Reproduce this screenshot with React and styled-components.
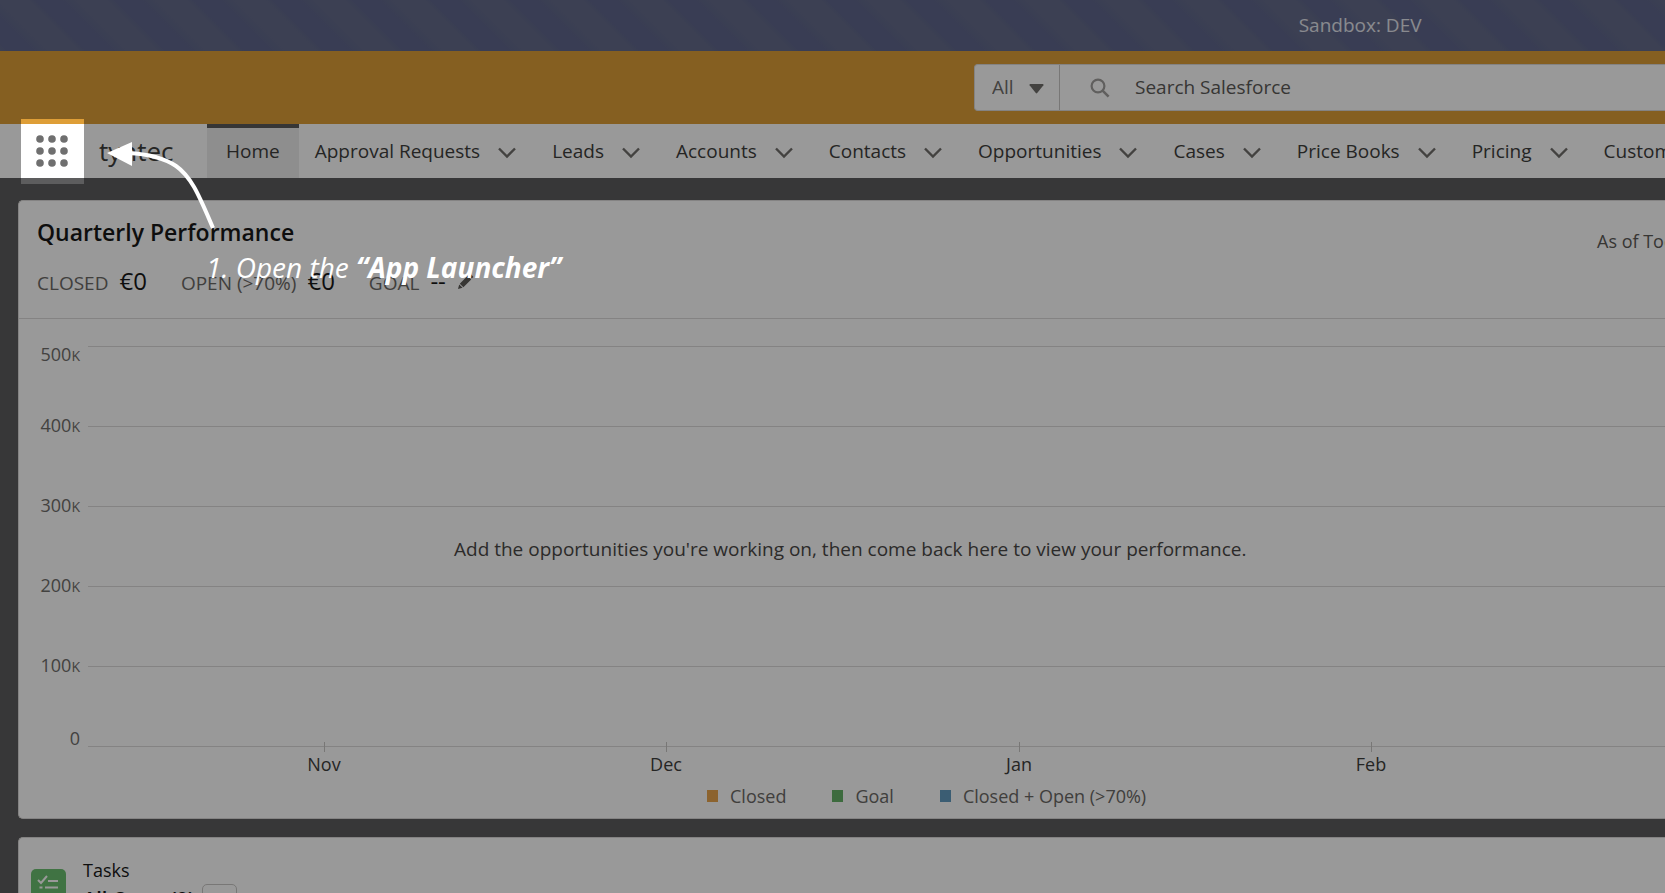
import styled, { createGlobalStyle } from 'styled-components';

const GlobalStyle = createGlobalStyle`
    * {
        box-sizing: border-box;
    }

    body {
        margin: 0;
        overflow: hidden;
        background: #5d5d5e;
        color: #3e3e3c;
        font-family: 'Open Sans', 'Noto Sans', sans-serif;
        font-size: 19px;
        line-height: 24px;
    }

    button,
    input,
    select {
        font: inherit;
        color: inherit;
    }

    h1,
    h2,
    p,
    ul,
    dl,
    dd {
        margin: 0;
        padding: 0;
    }
`;

const Page = styled.div`
    position: relative;
    height: 100vh;
    overflow: hidden;
    white-space: nowrap;
`;

const SandboxBanner = styled.div`
    height: 51px;
    padding-left: 78%;
    line-height: 51px;
    color: #e4e6ee;
    background: repeating-linear-gradient(45deg, #646b8a 0, #5f668c 6px 22px, #646b8a 34px 50px, #646b8a 56px);
`;

const GlobalHeader = styled.header`
    display: flex;
    height: 73px;
    padding: 13px 0 13px 974px;
    background: #de9e37;
`;

const SearchBar = styled.form`
    flex: 1;
    display: flex;
    align-items: center;
    border: 1px solid #dddbda;
    border-right: 0;
    border-radius: 4px 0 0 4px;
    background: #fff;
`;

const ScopeField = styled.label`
    position: relative;
    align-self: stretch;
    width: 85px;
    border-right: 1px solid #c9c7c5;

    svg {
        position: absolute;
        right: 15px;
        top: 19px;
        pointer-events: none;
    }
`;

const ScopeSelect = styled.select`
    appearance: none;
    width: 100%;
    height: 100%;
    padding: 0 0 2px 17px;
    border: 0;
    background: transparent;
    color: #706e6b;
`;

const SearchField = styled.label`
    flex: 1;
    display: flex;
    align-items: center;
    gap: 25px;
    padding-left: 30px;
`;

const SearchInput = styled.input`
    flex: 1;
    padding: 0 0 2px;
    border: 0;
    outline: 0;
    background: transparent;

    &::placeholder {
        color: #5c5a58;
        opacity: 1;
    }
`;

const NavBar = styled.nav`
    display: flex;
    height: 54px;
    padding-left: 32px;
    background: #fff;
`;

const LauncherButton = styled.button`
    flex: none;
    display: flex;
    align-items: center;
    justify-content: center;
    width: 40px;
    padding: 0;
    border: 0;
    background: transparent;
`;

const AppName = styled.h1`
    flex: none;
    width: 135px;
    padding-left: 27px;
    font-size: 26px;
    font-weight: 400;
    line-height: 54px;
`;

const NavList = styled.ul`
    display: flex;
    list-style: none;
`;

const NavItem = styled.li`
    display: flex;
    align-items: center;
    gap: 18px;
    padding: ${(props) => (props.$active ? '0 19px' : '0 20px 0 16px')};
    background: ${(props) => (props.$active ? '#ededed' : 'transparent')};
    box-shadow: ${(props) => (props.$active ? 'inset 0 4px #5a5a5a' : 'none')};
`;

const NavLink = styled.a`
    color: inherit;
    text-decoration: none;
`;

const IconButton = styled.button`
    display: flex;
    padding: 3px 0 0;
    border: 0;
    background: transparent;
`;

const Main = styled.main`
    display: grid;
    gap: 18px;
    padding: 22px 0 0 18px;
`;

const Card = styled.section`
    border: 1px solid #dddbda;
    border-right: 0;
    border-radius: 5px 0 0 5px;
    background: #fff;
`;

const CardHeader = styled.header`
    display: flex;
    justify-content: space-between;
    height: 118px;
    padding: 16px 0 0 18px;
    border-bottom: 1px solid #dddbda;
`;

const CardTitle = styled.h2`
    color: #181818;
    font-size: 23px;
    font-weight: 600;
    line-height: 30px;
`;

const AsOf = styled.p`
    width: 68px;
    padding-top: 12px;
    color: #5c5a58;
    font-size: 18px;
`;

const Stats = styled.dl`
    display: flex;
    gap: 34px;
    padding-top: 22px;
`;

const Stat = styled.div`
    display: flex;
    align-items: baseline;
    gap: 11px;

    dt {
        color: #6b6966;
    }

    dd {
        color: #181818;
        font-size: 24px;
    }
`;

const Chart = styled.div`
    position: relative;
    display: grid;
    grid-template-columns: 61px 1fr;
    column-gap: 8px;
    padding: 27px 0 8px;
`;

const YAxis = styled.ul`
    display: grid;
    grid-template-rows: 40px repeat(4, 80px) 40px;
    align-items: center;
    color: #706e6b;
    font-size: 18px;
    line-height: 16px;
    list-style: none;
    text-align: right;

    li:first-child {
        align-self: start;
    }

    li:last-child {
        align-self: end;
    }

    small {
        font-size: 14px;
    }
`;

const Plot = styled.div`
    display: grid;
    grid-template-rows: repeat(5, 80px);
    height: 402px;
    border-top: 1px solid #dddbda;
`;

const GridRow = styled.div`
    border-bottom: 1px solid #dddbda;
`;

const XAxis = styled.ul`
    grid-column: 2;
    display: grid;
    grid-template-columns: 65px 342fr 342fr 364fr 340fr 124fr;
    margin-top: -6px;
    font-size: 18px;
    list-style: none;
`;

const Month = styled.li`
    display: flex;
    flex-direction: column;
    align-items: center;

    &:first-child {
        grid-column: 2;
    }

    &::before {
        content: '';
        width: 1px;
        height: 10px;
        background: #c9c7c5;
    }
`;

const EmptyMessage = styled.p`
    position: absolute;
    left: 435px;
    top: 218px;
    color: #4a4846;
`;

const Legend = styled.ul`
    display: flex;
    gap: 46px;
    padding: 0 0 10px 688px;
    font-size: 18px;
    list-style: none;
`;

const LegendItem = styled.li`
    display: flex;
    align-items: center;
    gap: 12px;
    color: #6b6966;

    &::before {
        content: '';
        width: 11px;
        height: 12px;
        background: ${(props) => props.$color};
    }
`;

const TaskHeader = styled.header`
    display: flex;
    gap: 17px;
    padding: 20px 0 0 12px;
`;

const TaskIcon = styled.svg`
    margin-top: 11px;
`;

const TaskTitle = styled.h2`
    color: #181818;
    font-size: 18px;
    font-weight: 400;
    line-height: 24px;
`;

const TaskFilter = styled.div`
    display: flex;
    gap: 8px;
    padding-top: 2px;
    color: #181818;
    font-size: 20px;
    font-weight: 600;
    line-height: 30px;
`;

const FilterButton = styled.button`
    width: 35px;
    height: 32px;
    border: 1px solid #c9c7c5;
    border-radius: 5px;
    background: #fff;
`;

// dims everything around the highlighted launcher
const Spotlight = styled.div`
    position: absolute;
    left: 21px;
    top: 119px;
    width: 63px;
    height: 65px;
    box-shadow: 0 0 0 4000px rgba(0, 0, 0, 0.4);
    pointer-events: none;
`;

const HintArrow = styled.svg`
    position: absolute;
    left: 104px;
    top: 136px;
    pointer-events: none;
`;

const Hint = styled.p`
    position: absolute;
    left: 206px;
    top: 249px;
    color: #fff;
    font-size: 28px;
    font-style: italic;
    line-height: 36px;
`;

const tabs = ['Approval Requests', 'Leads', 'Accounts', 'Contacts', 'Opportunities', 'Cases', 'Price Books', 'Pricing', 'Customers'];
const ticks = [500, 400, 300, 200, 100, 0];
const months = ['Nov', 'Dec', 'Jan', 'Feb'];
const legend = [
    { label: 'Closed', color: '#e9a54d' },
    { label: 'Goal', color: '#67b268' },
    { label: 'Closed + Open (>70%)', color: '#639bc0' },
];

const Chevron = () => (
    <svg width="18" height="12" viewBox="0 0 18 12" fill="none" stroke="#706e6b" strokeWidth="2.4">
        <path d="M1 1.5l8 8 8-8" />
    </svg>
);

const App = () => (
    <Page>
        <GlobalStyle />
        <SandboxBanner>Sandbox: DEV</SandboxBanner>
        <GlobalHeader>
            <SearchBar role="search">
                <ScopeField>
                    <ScopeSelect aria-label="Search scope">
                        <option>All</option>
                    </ScopeSelect>
                    <svg width="15" height="10" viewBox="0 0 15 10" fill="#706e6b">
                        <path d="M1.2 0h12.6q1.2.2.6 1.2L8.2 9q-.7.8-1.4 0L.6 1.2Q0 .2 1.2 0z" />
                    </svg>
                </ScopeField>
                <SearchField>
                    <svg width="20" height="20" viewBox="0 0 20 20" fill="none" stroke="#a19f9d" strokeWidth="2.2">
                        <circle cx="8" cy="8" r="6.4" />
                        <path d="M12.6 12.6l6 6" strokeWidth="2.6" />
                    </svg>
                    <SearchInput aria-label="Search" placeholder="Search Salesforce" />
                </SearchField>
            </SearchBar>
        </GlobalHeader>

        <NavBar>
            <LauncherButton aria-label="App Launcher">
                <svg width="32" height="32" viewBox="0 0 32 32" fill="#6f6f6f">
                    {[4, 16, 28].map((cy) => [4, 16, 28].map((cx) => <circle key={`${cx}-${cy}`} cx={cx} cy={cy} r="3.8" />))}
                </svg>
            </LauncherButton>
            <AppName>tyntec</AppName>
            <NavList>
                <NavItem $active>
                    <NavLink href="#home">Home</NavLink>
                </NavItem>
                {tabs.map((tab) => (
                    <NavItem key={tab}>
                        <NavLink href="#tab">{tab}</NavLink>
                        <IconButton aria-label={`${tab} list`}>
                            <Chevron />
                        </IconButton>
                    </NavItem>
                ))}
            </NavList>
        </NavBar>

        <Main>
            <Card>
                <CardHeader>
                    <div>
                        <CardTitle>Quarterly Performance</CardTitle>
                        <Stats>
                            <Stat>
                                <dt>CLOSED</dt>
                                <dd>€0</dd>
                            </Stat>
                            <Stat>
                                <dt>OPEN (&gt;70%)</dt>
                                <dd>€0</dd>
                            </Stat>
                            <Stat>
                                <dt>GOAL</dt>
                                <dd>--</dd>
                                <IconButton aria-label="Edit goal">
                                    <svg width="17" height="16" viewBox="0 0 17 16" fill="#5c5a58">
                                        <path d="M1 15l1.200-4.600 3.400 3.400zM2.800 9.800L10.600 1.800 14.200 5.400 6.400 13.200zM11.300 1.100L12.600.3q.7-.5 1.400 0l1.900 1.900q.6.7 0 1.400l-1 1z" />
                                    </svg>
                                </IconButton>
                            </Stat>
                        </Stats>
                    </div>
                    <AsOf>As of Today</AsOf>
                </CardHeader>

                <Chart>
                    <YAxis>
                        {ticks.map((tick) => (
                            <li key={tick}>
                                {tick}
                                {tick > 0 && <small>K</small>}
                            </li>
                        ))}
                    </YAxis>
                    <Plot>
                        {ticks.slice(1).map((tick) => (
                            <GridRow key={tick} />
                        ))}
                    </Plot>
                    <XAxis>
                        {months.map((month) => (
                            <Month key={month}>{month}</Month>
                        ))}
                    </XAxis>
                    <EmptyMessage>Add the opportunities you&apos;re working on, then come back here to view your performance.</EmptyMessage>
                </Chart>
                <Legend>
                    {legend.map(({ label, color }) => (
                        <LegendItem key={label} $color={color}>
                            {label}
                        </LegendItem>
                    ))}
                </Legend>
            </Card>

            <Card>
                <TaskHeader>
                    <TaskIcon width="35" height="35" viewBox="0 0 35 35">
                        <rect width="35" height="35" rx="5" fill="#6cc070" />
                        <path d="M7 11l3 3 6-7M17 12h10M14 18.5h13M14 25h13M8.5 18.5h3M8.5 25h3" fill="none" stroke="#fff" strokeWidth="2" />
                    </TaskIcon>
                    <div>
                        <TaskTitle>Tasks</TaskTitle>
                        <TaskFilter>
                            <span>All Open (0)</span>
                            <FilterButton aria-label="Choose list" />
                        </TaskFilter>
                    </div>
                </TaskHeader>
            </Card>
        </Main>

        <Spotlight />
        <HintArrow width="120" height="96" viewBox="0 0 120 96">
            <path d="M24 17C44 18 60 22 72 30C88 41 96 62 109 92" fill="none" stroke="#fff" strokeWidth="4" />
            <path d="M3 17L28 6v24z" fill="#fff" />
        </HintArrow>
        <Hint>
            1. Open the <b>“App Launcher”</b>
        </Hint>
    </Page>
);

export default App;
